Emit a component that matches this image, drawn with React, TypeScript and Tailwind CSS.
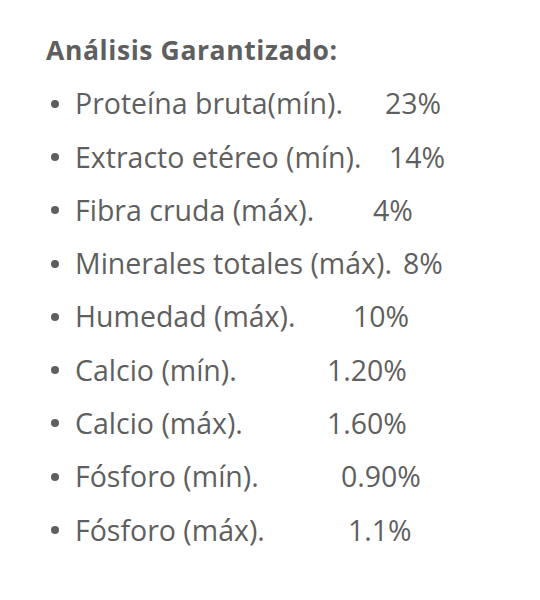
import React from 'react';

const rows = [
  { label: 'Proteína bruta(mín).', value: '23%', w: 'w-[310px]' },
  { label: 'Extracto etéreo (mín).', value: '14%', w: 'w-[314px]' },
  { label: 'Fibra cruda (máx).', value: '4%', w: 'w-[298px]' },
  { label: 'Minerales totales (máx).', value: '8%', w: 'w-[328px]' },
  { label: 'Humedad (máx).', value: '10%', w: 'w-[278px]' },
  { label: 'Calcio (mín).', value: '1.20%', w: 'w-[252px]' },
  { label: 'Calcio (máx).', value: '1.60%', w: 'w-[252px]' },
  { label: 'Fósforo (mín).', value: '0.90%', w: 'w-[266px]' },
  { label: 'Fósforo (máx).', value: '1.1%', w: 'w-[273px]' },
];

export default function App() {
  return (
    <div className="w-[540px] h-[600px] bg-white pl-[46px] pt-[32px] text-[#5f5f5f] font-['Open_Sans',sans-serif]">
      <h2 className="text-[26.5px] font-bold leading-[36px] tracking-[0.6px]">Análisis Garantizado:</h2>
      <ul className="mt-[9px]">
        {rows.map(row => (
          <li key={row.label} className="flex items-center h-[53.3px] text-[28.5px] font-medium whitespace-nowrap">
            <span className="w-[29px] flex">
              <span className="ml-[5px] w-[8px] h-[8px] rounded-full bg-[#5f5f5f]" />
            </span>
            <span className={row.w}>{row.label}</span>
            <span>{row.value}</span>
          </li>
        ))}
      </ul>
    </div>
  );
}
